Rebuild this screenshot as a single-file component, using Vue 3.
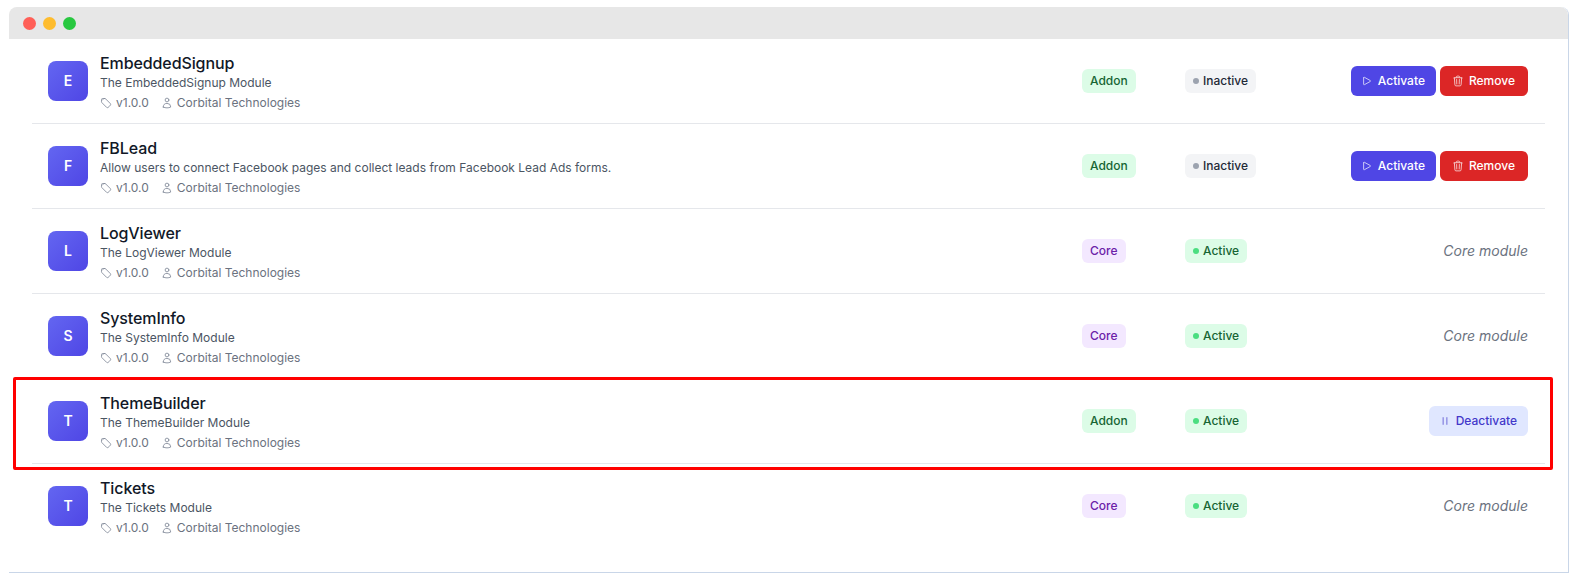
<template>
  <div class="window">
    <div class="title-bar">
      <span class="dot red"></span>
      <span class="dot yellow"></span>
      <span class="dot green"></span>
    </div>
    <div class="list">
      <div v-for="mod in modules" :key="mod.name" class="row">
        <div class="info">
          <div class="avatar">{{ mod.name[0] }}</div>
          <div class="text">
            <div class="name">{{ mod.name }}</div>
            <div class="desc">{{ mod.desc || `The ${mod.name} Module` }}</div>
            <div class="meta">
              <span class="meta-item">
                <svg class="meta-icon" viewBox="0 0 24 24" fill="none" stroke="currentColor" stroke-width="1.75" stroke-linecap="round" stroke-linejoin="round">
                  <path d="M9.568 3H5.25A2.25 2.25 0 0 0 3 5.25v4.318c0 .597.237 1.17.659 1.591l9.581 9.581c.699.699 1.78.872 2.607.33a18.095 18.095 0 0 0 5.223-5.223c.542-.827.369-1.908-.33-2.607L11.16 3.66A2.25 2.25 0 0 0 9.568 3Z" />
                  <path d="M6 6h.008v.008H6V6Z" />
                </svg>
                v1.0.0
              </span>
              <span class="meta-item">
                <svg class="meta-icon" viewBox="0 0 24 24" fill="none" stroke="currentColor" stroke-width="1.75" stroke-linecap="round" stroke-linejoin="round">
                  <path d="M15.75 6a3.75 3.75 0 1 1-7.5 0 3.75 3.75 0 0 1 7.5 0ZM4.501 20.118a7.5 7.5 0 0 1 14.998 0A17.933 17.933 0 0 1 12 21.75c-2.676 0-5.216-.584-7.499-1.632Z" />
                </svg>
                Corbital Technologies
              </span>
            </div>
          </div>
        </div>
        <div class="cell"><span class="badge" :class="mod.type.toLowerCase()">{{ mod.type }}</span></div>
        <div class="cell">
          <span class="badge" :class="mod.active ? 'active' : 'inactive'">
            <i class="status-dot"></i>{{ mod.active ? "Active" : "Inactive" }}
          </span>
        </div>
        <div class="actions">
          <span v-if="mod.type === 'Core'" class="core-note">Core module</span>
          <button v-else-if="mod.active" class="btn deactivate">
            <svg class="btn-icon" viewBox="0 0 24 24" fill="none" stroke="currentColor" stroke-width="2" stroke-linecap="round" stroke-linejoin="round">
              <path d="M15.75 5.25v13.5m-7.5-13.5v13.5" />
            </svg>
            Deactivate
          </button>
          <template v-else>
            <button class="btn activate">
              <svg class="btn-icon" viewBox="0 0 24 24" fill="none" stroke="currentColor" stroke-width="2" stroke-linecap="round" stroke-linejoin="round">
                <path d="M5.25 5.653c0-.856.917-1.398 1.667-.986l11.54 6.347a1.125 1.125 0 0 1 0 1.972l-11.54 6.347a1.125 1.125 0 0 1-1.667-.986V5.653Z" />
              </svg>
              Activate
            </button>
            <button class="btn remove">
              <svg class="btn-icon" viewBox="0 0 24 24" fill="none" stroke="currentColor" stroke-width="2" stroke-linecap="round" stroke-linejoin="round">
                <path d="m14.74 9-.346 9m-4.788 0L9.26 9m9.968-3.21c.342.052.682.107 1.022.166m-1.022-.165L18.16 19.673a2.25 2.25 0 0 1-2.244 2.077H8.084a2.25 2.25 0 0 1-2.244-2.077L4.772 5.79m14.456 0a48.108 48.108 0 0 0-3.478-.397m-12 .562c.34-.059.68-.114 1.022-.165m0 0a48.11 48.11 0 0 1 3.478-.397m7.5 0v-.916c0-1.18-.91-2.164-2.09-2.201a51.964 51.964 0 0 0-3.32 0c-1.18.037-2.09 1.022-2.09 2.201v.916m7.5 0a48.667 48.667 0 0 0-7.5 0" />
              </svg>
              Remove
            </button>
          </template>
        </div>
      </div>
    </div>
    <div class="highlight"></div>
  </div>
</template>

<script setup>
const modules = [
  { name: "EmbeddedSignup", type: "Addon", active: false },
  {
    name: "FBLead",
    desc: "Allow users to connect Facebook pages and collect leads from Facebook Lead Ads forms.",
    type: "Addon",
    active: false,
  },
  { name: "LogViewer", type: "Core", active: true },
  { name: "SystemInfo", type: "Core", active: true },
  { name: "ThemeBuilder", type: "Addon", active: true },
  { name: "Tickets", type: "Core", active: true },
];
</script>

<style>
html,
body {
  background: #fff;
}
</style>

<style scoped>
.window {
  position: relative;
  box-sizing: border-box;
  width: 1560px;
  height: 566px;
  margin: 7px 0 0 9px;
  border-right: 1px solid #c9d6e8;
  border-bottom: 1px solid #c9d6e8;
  border-radius: 8px 8px 0 0;
  font-family: Inter, "Liberation Sans", sans-serif;
  background: #fff;
}
.title-bar {
  display: flex;
  align-items: center;
  gap: 7px;
  height: 32px;
  padding-left: 14px;
  box-sizing: border-box;
  background: #e7e7e7;
  border-radius: 8px 8px 0 0;
}
.dot {
  width: 13px;
  height: 13px;
  border-radius: 50%;
}
.red {
  background: #ff5f57;
}
.yellow {
  background: #febc2e;
}
.green {
  background: #28c840;
}
.list {
  padding: 0 23px;
}
.row {
  display: grid;
  grid-template-columns: 1034px 103px 120px 223px;
  align-items: center;
  box-sizing: border-box;
  height: 85px;
  padding: 0 16px;
  border-bottom: 1px solid #e5e7eb;
}
.row:last-child {
  border-bottom-color: transparent;
}
.info {
  display: flex;
  align-items: center;
  gap: 12px;
}
.avatar {
  display: flex;
  align-items: center;
  justify-content: center;
  width: 40px;
  height: 40px;
  border-radius: 8px;
  background: linear-gradient(135deg, #6366f1, #4f46e5);
  color: #fff;
  font-size: 14px;
  line-height: 20px;
  font-weight: 600;
}
.name {
  font-size: 16px;
  line-height: 24px;
  font-weight: 500;
  letter-spacing: -0.1px;
  color: #111827;
}
.desc {
  font-size: 12px;
  line-height: 16px;
  color: #4b5563;
}
.meta {
  display: flex;
  gap: 12px;
  margin-top: 4px;
  font-size: 12px;
  line-height: 16px;
  color: #6b7280;
}
.meta-item {
  display: flex;
  align-items: center;
  gap: 4px;
}
.meta-icon {
  width: 12px;
  height: 12px;
  color: #858d9b;
}
.cell {
  display: flex;
}
.badge {
  display: flex;
  align-items: center;
  padding: 4px 8px;
  border-radius: 6px;
  font-size: 12px;
  line-height: 16px;
  font-weight: 500;
}
.addon {
  background: #dcfce7;
  color: #166534;
}
.core {
  background: #f3e8ff;
  color: #6b21a8;
}
.active {
  background: #dcfce7;
  color: #166534;
}
.inactive {
  background: #f3f4f6;
  color: #1f2937;
}
.status-dot {
  width: 6px;
  height: 6px;
  margin-right: 4px;
  border-radius: 50%;
}
.active .status-dot {
  background: #4ade80;
}
.inactive .status-dot {
  background: #9ca3af;
}
.actions {
  display: flex;
  justify-content: flex-end;
  gap: 4px;
}
.core-note {
  font-size: 14px;
  line-height: 20px;
  font-style: italic;
  color: #6b7280;
}
.btn {
  display: inline-flex;
  align-items: center;
  height: 30px;
  border: none;
  border-radius: 6px;
  font-family: inherit;
  font-size: 12px;
  line-height: 16px;
  font-weight: 500;
  cursor: pointer;
}
.btn-icon {
  width: 12px;
  height: 12px;
  opacity: 0.7;
}
.activate {
  gap: 5px;
  padding: 0 11px 0 10px;
  background: #4f46e5;
  color: #fff;
}
.remove {
  gap: 5px;
  padding: 0 13px 0 12px;
  background: #dc2626;
  color: #fff;
}
.deactivate {
  gap: 5px;
  padding: 0 11px 0 10px;
  background: #e0e7ff;
  color: #4338ca;
}
.highlight {
  position: absolute;
  left: 4px;
  top: 370px;
  width: 1540px;
  height: 93px;
  box-sizing: border-box;
  border: 3px solid #ff0000;
  border-radius: 2px;
  pointer-events: none;
}
</style>
